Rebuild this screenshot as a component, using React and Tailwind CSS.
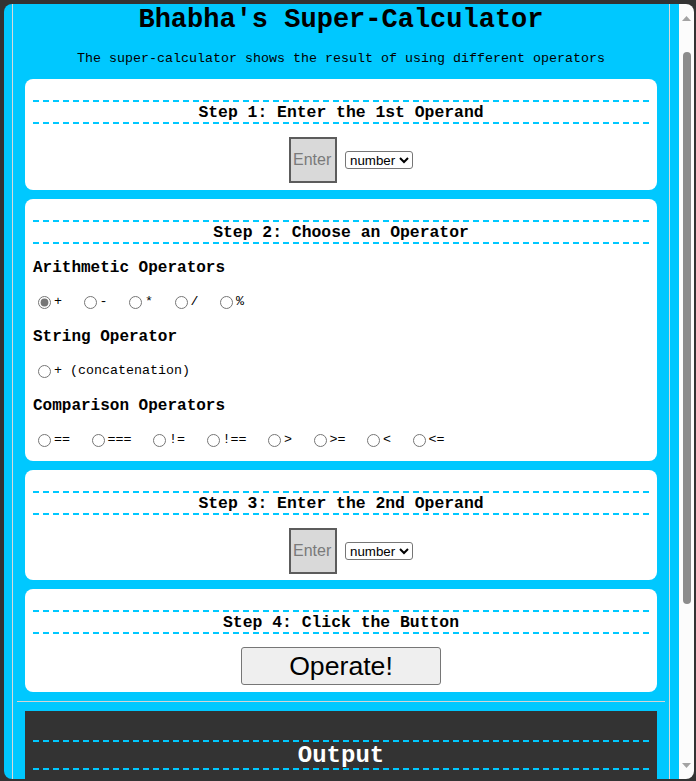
import React, { useState } from 'react';

const arithmetic = ['+', '-', '*', '/', '%'];
const comparison = ['==', '===', '!=', '!==', '>', '>=', '<', '<='];

const StepTitle = ({ children }) => (
  <h3 className="border-y-2 border-dashed border-[#00c8ff] pt-[2px] text-center text-[16.4px] font-bold leading-[18px]">
    {children}
  </h3>
);

const OperandRow = ({ value, onChange, type, onType }) => (
  <div className="mt-[13px] flex items-center justify-center gap-2 pl-5">
    <input
      type="text"
      value={value}
      onChange={(e) => onChange(e.target.value)}
      placeholder="Enter"
      className="h-[46px] w-[48px] border-2 border-[#5c5c5c] bg-[#d9d9d9] px-[2px] font-['Liberation_Sans',Arial,sans-serif] text-base text-black placeholder:text-[#7a7a7a]"
    />
    <select
      value={type}
      onChange={(e) => onType(e.target.value)}
      className="h-[18px] w-[68px] rounded-[3px] border border-[#767676] bg-white font-['Liberation_Sans',Arial,sans-serif] text-[13.33px] text-black"
    >
      <option value="number">number</option>
      <option value="string">string</option>
      <option value="boolean">boolean</option>
    </select>
  </div>
);

const Radio = ({ op, label, selected, onSelect }) => (
  <label className="flex items-center">
    <input
      type="radio"
      name="operator"
      checked={selected === op}
      onChange={() => onSelect(op)}
      className="ml-[5px] mr-[3px] h-[13px] w-[13px] accent-[#767676]"
    />
    <span className="mr-[16.5px] text-[13.33px] leading-[16px]">{label || op}</span>
  </label>
);

const ScrollBar = () => (
  <div className="flex w-[15px] shrink-0 flex-col items-center bg-[#fcfcfc] pb-[11px] pt-3">
    <svg width="9" height="5" viewBox="0 0 9 5">
      <path d="M4.5 0 L9 5 L0 5 Z" fill="#a3a3a3" />
    </svg>
    <div className="mt-[31px] h-[552px] w-2 rounded-full bg-[#8c8c8c]" />
    <div className="flex-1" />
    <svg width="9" height="5" viewBox="0 0 9 5">
      <path d="M0 0 L9 0 L4.5 5 Z" fill="#a3a3a3" />
    </svg>
  </div>
);

export default function App() {
  const [first, setFirst] = useState('');
  const [second, setSecond] = useState('');
  const [firstType, setFirstType] = useState('number');
  const [secondType, setSecondType] = useState('number');
  const [op, setOp] = useState('+');
  const [result, setResult] = useState('');

  const cast = (v, t) => (t === 'number' ? Number(v) : t === 'boolean' ? v === 'true' : String(v));

  const operate = () => {
    const a = cast(first, firstType);
    const b = cast(second, secondType);
    const fns = {
      '+': () => a + b,
      concat: () => String(a) + String(b),
      '-': () => a - b,
      '*': () => a * b,
      '/': () => a / b,
      '%': () => a % b,
      '==': () => a == b,
      '===': () => a === b,
      '!=': () => a != b,
      '!==': () => a !== b,
      '>': () => a > b,
      '>=': () => a >= b,
      '<': () => a < b,
      '<=': () => a <= b,
    };
    setResult(String(fns[op]()));
  };

  return (
    <div className="h-screen bg-[#333333] pb-[2px] pl-1 pr-[2px] pt-1 font-['Liberation_Mono','Courier_New',monospace] text-black">
      <div className="flex h-full overflow-hidden rounded-lg">
        <div className="min-w-0 flex-1 overflow-hidden bg-[#00c8ff]">
          <div className="ml-2 mr-[9px] border-x border-[#d9d9d9] px-1 pb-3">
            <h1 className="pt-[3px] text-center text-[27px] font-bold leading-[27px]">Bhabha's Super-Calculator</h1>
            <p className="mt-[17px] text-center text-[13.33px] leading-[16px]">
              The super-calculator shows the result of using different operators
            </p>

            <div className="mx-2 mt-3 flex flex-col gap-[9px]">
              <section className="rounded-lg bg-white px-2 pb-[7px] pt-[21px]">
                <StepTitle>Step 1: Enter the 1st Operand</StepTitle>
                <OperandRow value={first} onChange={setFirst} type={firstType} onType={setFirstType} />
              </section>

              <section className="rounded-lg bg-white px-2 pb-[13px] pt-[21px]">
                <StepTitle>Step 2: Choose an Operator</StepTitle>
                <h4 className="mt-[15px] pt-[1px] text-base font-bold leading-[17px]">Arithmetic Operators</h4>
                <div className="mt-[17px] flex h-4 items-center">
                  {arithmetic.map((o) => (
                    <Radio key={o} op={o} selected={op} onSelect={setOp} />
                  ))}
                </div>
                <h4 className="mt-[18px] pt-[1px] text-base font-bold leading-[17px]">String Operator</h4>
                <div className="mt-[17px] flex h-4 items-center">
                  <Radio op="concat" label="+ (concatenation)" selected={op} onSelect={setOp} />
                </div>
                <h4 className="mt-[18px] pt-[1px] text-base font-bold leading-[17px]">Comparison Operators</h4>
                <div className="mt-[17px] flex h-4 items-center">
                  {comparison.map((o) => (
                    <Radio key={o} op={o} selected={op} onSelect={setOp} />
                  ))}
                </div>
              </section>

              <section className="rounded-lg bg-white px-2 pb-[6px] pt-[21px]">
                <StepTitle>Step 3: Enter the 2nd Operand</StepTitle>
                <OperandRow value={second} onChange={setSecond} type={secondType} onType={setSecondType} />
              </section>

              <section className="rounded-lg bg-white px-2 pb-[7px] pt-[21px]">
                <StepTitle>Step 4: Click the Button</StepTitle>
                <div className="mt-[13px] flex justify-center">
                  <button
                    type="button"
                    onClick={operate}
                    className="h-[38px] w-[200px] rounded-[3px] border border-[#767676] bg-[#efefef] font-['Liberation_Sans',Arial,sans-serif] text-[26.67px] leading-none text-black"
                  >
                    Operate!
                  </button>
                </div>
              </section>
            </div>

            <hr className="mt-[9px] border-t border-[#d4d4d4]" />

            <section className="mx-2 mt-[9px] bg-[#333333] px-2 pb-6 pt-[29px] text-white">
              <h2 className="border-y-2 border-dashed border-[#00c8ff] pt-[1px] text-center text-[24px] font-bold leading-[25px]">
                Output
              </h2>
              <div className="mt-4 min-h-[200px] px-2 text-center text-lg">{result}</div>
            </section>
          </div>
        </div>
        <ScrollBar />
      </div>
    </div>
  );
}
